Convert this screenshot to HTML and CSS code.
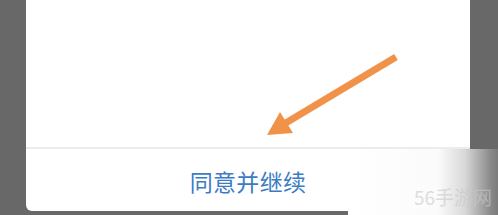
FILE: index.html
```html
<!DOCTYPE html>
<html>
<head>
<meta charset="utf-8">
<link rel="stylesheet" href="styles.css">
</head>
<body>
<div class="card">
  <div class="content"></div>
  <div class="divider"></div>
  <div class="action">同意并继续</div>
</div>
<svg class="arrow" width="498" height="215" viewBox="0 0 498 215">
  <line x1="396" y1="57" x2="284" y2="124" stroke="#f0924a" stroke-width="7" stroke-linecap="butt"/>
  <polygon points="267,135 280,112 293,133" fill="#f0924a"/>
</svg>
<div class="watermark"><span class="wm-text">56手游网</span></div>
</body>
</html>
```
FILE: styles.css
```css
html, body {
  margin: 0;
  padding: 0;
}
body {
  width: 498px;
  height: 215px;
  background: #686868;
  overflow: hidden;
  position: relative;
  font-family: "Noto Sans CJK SC", "Noto Sans", sans-serif;
}
.card {
  margin-left: 26px;
  width: 444px;
  height: 211px;
  background: #ffffff;
  border-radius: 0 0 6px 6px;
  display: flex;
  flex-direction: column;
}
.content {
  height: 147px;
}
.divider {
  height: 2px;
  background: #ececec;
}
.action {
  flex: 1;
  display: flex;
  align-items: center;
  justify-content: center;
  color: #3c7cc4;
  font-size: 23px;
  letter-spacing: 0.3px;
  padding-top: 2px;
  padding-left: 0;
}
.arrow {
  position: absolute;
  left: 0;
  top: 0;
}
.watermark {
  position: absolute;
  left: 348px;
  top: 149px;
  width: 150px;
  height: 66px;
  background: linear-gradient(to right, #ffffff 0%, #fbfbfb 60%, #d8d8d8 78%, #8a8a8a 95%, #7a7a7a 100%);
}
.wm-text {
  position: absolute;
  left: 66px;
  top: 38px;
  font-size: 19px;
  white-space: nowrap;
  color: rgba(200, 200, 200, 0.6);
  font-family: "Noto Sans CJK SC", sans-serif;
  letter-spacing: 0px;
  line-height: 1;
}
```
